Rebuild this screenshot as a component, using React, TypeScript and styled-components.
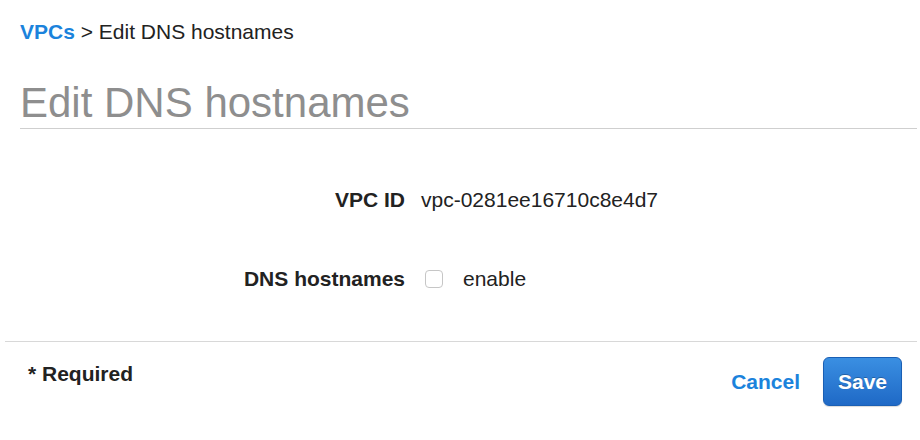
import styled, { createGlobalStyle } from "styled-components";

const GlobalStyle = createGlobalStyle`
  html, body {
    margin: 0;
    padding: 0;
    background: #ffffff;
  }

  body {
    font-family: "Liberation Sans", Arial, Helvetica, sans-serif;
    color: #222222;
  }
`;

const Page = styled.div`
  width: 920px;
  box-sizing: border-box;
  padding: 0 3px 0 5px;
`;

const Header = styled.header`
  padding: 20px 0 0 15px;
`;

const Breadcrumb = styled.nav`
  font-size: 21px;
  line-height: 24px;
  color: #222222;
  white-space: nowrap;
`;

const CrumbLink = styled.a`
  color: #1b83dc;
  font-weight: bold;
  text-decoration: none;
  cursor: pointer;
`;

const Title = styled.h1`
  margin: 35px 0 0;
  padding-bottom: 1px;
  font-size: 42px;
  line-height: 48px;
  font-weight: normal;
  color: #8e8e8e;
  border-bottom: 1px solid #cfcfcf;
`;

const Form = styled.div`
  display: grid;
  grid-template-columns: 400px 1fr;
  column-gap: 16px;
  row-gap: 55px;
  margin-top: 59px;
  padding-bottom: 50px;
  font-size: 21px;
  line-height: 24px;
`;

const Label = styled.div`
  font-weight: bold;
  text-align: right;
`;

const Value = styled.div`
  display: flex;
  align-items: center;
`;

const Checkbox = styled.input.attrs({ type: "checkbox" })`
  appearance: none;
  width: 18px;
  height: 18px;
  margin: 0 20px 0 4px;
  border: 1px solid #c6c6c6;
  border-radius: 4px;
  background: #ffffff;
  box-sizing: border-box;
`;

const Footer = styled.footer`
  display: flex;
  justify-content: space-between;
  align-items: flex-start;
  border-top: 1px solid #d8d8d8;
  height: 98px;
`;

const Required = styled.div`
  padding: 20px 0 0 23px;
  font-size: 21px;
  line-height: 24px;
  font-weight: bold;
`;

const Actions = styled.div`
  display: flex;
  align-items: center;
  gap: 23px;
  margin: 15px 15px 0 0;
`;

const LinkButton = styled.button`
  border: none;
  background: none;
  padding: 0;
  font-family: inherit;
  font-size: 21px;
  line-height: 24px;
  font-weight: bold;
  color: #1b83dc;
  cursor: pointer;
`;

const PrimaryButton = styled.button`
  display: flex;
  align-items: center;
  justify-content: center;
  box-sizing: border-box;
  width: 79px;
  height: 49px;
  padding: 0;
  border: 1px solid #1a5fb4;
  border-radius: 6px;
  background: linear-gradient(#3a8fe2, #1f69c6);
  font-family: inherit;
  font-size: 21px;
  font-weight: bold;
  color: #ffffff;
  text-shadow: 0 -1px 0 rgba(0, 0, 0, 0.25);
  box-shadow: 0 1px 1px rgba(0, 0, 0, 0.15);
  cursor: pointer;
`;

export default function App() {
  return (
    <>
      <GlobalStyle />
      <Page>
        <Header>
          <Breadcrumb>
            <CrumbLink>VPCs</CrumbLink> &gt; Edit DNS hostnames
          </Breadcrumb>
          <Title>Edit DNS hostnames</Title>
        </Header>
        <Form>
          <Label>VPC ID</Label>
          <Value>vpc-0281ee16710c8e4d7</Value>
          <Label>DNS hostnames</Label>
          <Value>
            <Checkbox />
            enable
          </Value>
        </Form>
        <Footer>
          <Required>* Required</Required>
          <Actions>
            <LinkButton>Cancel</LinkButton>
            <PrimaryButton>Save</PrimaryButton>
          </Actions>
        </Footer>
      </Page>
    </>
  );
}
